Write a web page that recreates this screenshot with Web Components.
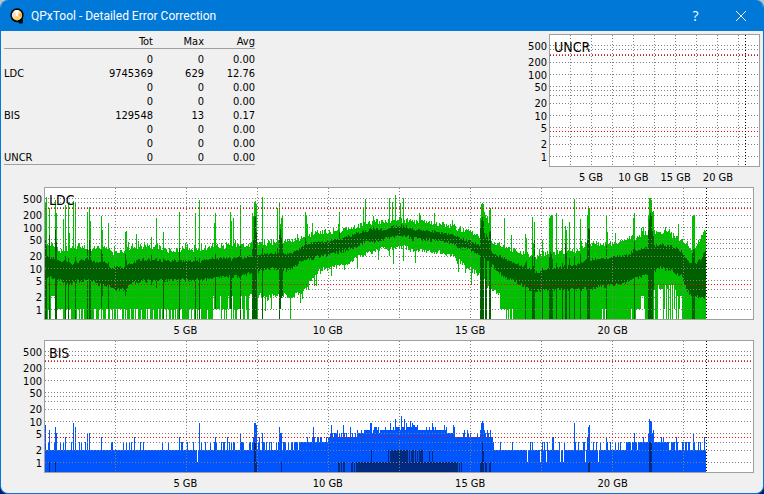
<!DOCTYPE html>
<html lang="en">
<head>
<meta charset="utf-8">
<title>QPxTool - Detailed Error Correction</title>
<style>
  body {
    margin: 0;
    background: linear-gradient(#b9c3cc 50%, #001a6e 50%);
    font: 11px/14px "DejaVu Sans Condensed", "Noto Sans", sans-serif;
    color: #000;
  }
  .summary {
    display: flex;
    justify-content: space-between;
    padding: 0 3px;
  }
  .summary error-chart {
    width: 254px;
  }
  .wide {
    margin-right: 9px;
  }
</style>
</head>
<body>
<tool-window>
  <span slot="title">QPxTool - Detailed Error Correction</span>
  <div class="summary">
    <error-table></error-table>
    <error-chart series="none">UNCR</error-chart>
  </div>
  <error-chart class="wide" series="ldc">LDC</error-chart>
  <error-chart class="wide" series="bis">BIS</error-chart>
</tool-window>

<script>
class ToolWindow extends HTMLElement {
  connectedCallback() {
    this.attachShadow({ mode: 'open' });
    this.shadowRoot.innerHTML = `
      <style>
        :host {
          display: flex;
          flex-direction: column;
          box-sizing: border-box;
          min-height: 100vh;
          border: 1px solid #0078d7;
          border-top: 0;
          border-radius: 8px;
          overflow: hidden;
          background: #f0f0f0;
        }
        header {
          display: flex;
          align-items: center;
          height: 31px;
          padding-left: 8px;
          background: #0078d7;
          color: #fff;
        }
        h1 {
          flex: 1;
          margin: 0 0 0 6px;
          font: 12px/16px Roboto, sans-serif;
        }
        header svg {
          display: block;
        }
        button {
          width: 45px;
          height: 31px;
          padding: 0;
          border: 0;
          display: flex;
          align-items: center;
          justify-content: center;
          background: none;
          color: inherit;
          font: 14px/16px "Open Sans", sans-serif;
        }
        main {
          padding-top: 3px;
        }
      </style>
      <header>
        <svg width="16" height="16" viewBox="0 0 16 16" aria-hidden="true">
          <ellipse cx="8" cy="7.2" rx="6.6" ry="7" fill="#000"/>
          <path d="M8.5 12.5 13.8 11v4.4H10z" fill="#000"/>
          <circle cx="8" cy="7.2" r="5.1" fill="#f4dfb5"/>
          <path d="M8 7.2 5 3.1A5.1 5.1 0 0 1 10.3 2.7z" fill="#fffbe9"/>
          <path d="M8 7.2 12.6 5a5.1 5.1 0 0 1 0 4.6z" fill="#ffad3c"/>
          <path d="M8 7.2 11 11.3A5.1 5.1 0 0 1 5 11.3z" fill="#ffd24e"/>
          <path d="M8 7.2 3.1 8.6A5.1 5.1 0 0 1 3.5 4.9z" fill="#e8dde4"/>
          <circle cx="8" cy="7.2" r="1.4" fill="#fff"/>
        </svg>
        <h1><slot name="title"></slot></h1>
        <button type="button" aria-label="Help">?</button>
        <button type="button" aria-label="Close">
          <svg width="10" height="10" viewBox="0 0 10 10">
            <path d="M0 0 10 10M10 0 0 10" stroke="#fff" fill="none"/>
          </svg>
        </button>
      </header>
      <main><slot></slot></main>
    `;
  }
}

class ErrorTable extends HTMLElement {
  connectedCallback() {
    const rows = [
      ['', '0', '0', '0.00'],
      ['LDC', '9745369', '629', '12.76'],
      ['', '0', '0', '0.00'],
      ['', '0', '0', '0.00'],
      ['BIS', '129548', '13', '0.17'],
      ['', '0', '0', '0.00'],
      ['', '0', '0', '0.00'],
      ['UNCR', '0', '0', '0.00']
    ];
    this.attachShadow({ mode: 'open' });
    this.shadowRoot.innerHTML = `
      <style>
        :host {
          display: block;
        }
        table {
          border-collapse: separate;
          border-spacing: 0;
          table-layout: fixed;
          width: 251px;
          border-bottom: 1px solid #a0a0a0;
        }
        th, td {
          padding: 2px 0 0;
          font-weight: normal;
          text-align: right;
          line-height: 12px;
          height: 12px;
        }
        thead th {
          border-bottom: 1px solid #a0a0a0;
        }
        th:first-child {
          text-align: left;
          width: 80px;
        }
        th:nth-child(2) { width: 69px; }
        th:nth-child(3) { width: 51px; }
        tbody::before {
          content: "";
          display: table-row;
          height: 3px;
        }
      </style>
      <table>
        <thead>
          <tr><th></th><th scope="col">Tot</th><th scope="col">Max</th><th scope="col">Avg</th></tr>
        </thead>
        <tbody>
          ${rows.map(r => `<tr><th scope="row">${r[0]}</th><td>${r[1]}</td><td>${r[2]}</td><td>${r[3]}</td></tr>`).join('')}
        </tbody>
      </table>
    `;
  }
}

const PLOT_HEIGHT = 131;
const COLUMNS = 661;

// small repeatable generator, so the noise is the same on every load
function generator(seed) {
  return () => {
    seed = (seed * 1664525 + 1013904223) >>> 0;
    return seed / 4294967296;
  };
}

// linear interpolation in a flat list of x, y pairs
function curve(points, x) {
  for (let i = 2; i < points.length; i += 2) {
    if (x <= points[i]) {
      const t = (x - points[i - 2]) / (points[i] - points[i - 2]);
      return points[i - 1] + (points[i + 1] - points[i - 1]) * Math.max(0, t);
    }
  }
  return points[points.length - 1];
}

// row of an error count on the logarithmic scale
function row(value) {
  return value < 1 ? PLOT_HEIGHT : Math.round(121 - 41 * Math.log10(value));
}

function bar(x, top, bottom) {
  top = Math.round(top);
  bottom = Math.round(bottom);
  return bottom > top ? `M${x} ${top}h1V${bottom}h-1z` : '';
}

const LDC_TOP = [0, 54, 8, 58, 14, 62, 26, 60, 34, 57, 44, 62, 52, 59, 60, 60, 68, 64, 76, 63, 86, 59, 105, 58,
  125, 62, 145, 61, 165, 59, 195, 57, 230, 54, 250, 53, 268, 45, 285, 43, 300, 42, 312, 38, 325, 35, 345, 33,
  352, 32, 365, 33, 385, 35, 402, 37, 415, 41, 425, 44, 435, 48, 448, 54, 458, 59, 468, 62, 482, 66, 492, 69,
  502, 65, 515, 64, 528, 64, 539, 57, 556, 55, 569, 56, 582, 52, 592, 48, 599, 45, 612, 44, 622, 45, 632, 50,
  639, 55, 647, 61, 655, 50, 661, 42];
const LDC_DARK_TOP = [0, 69, 12, 72, 28, 76, 40, 72, 52, 75, 60, 75, 65, 80, 78, 79, 90, 74, 98, 72, 155, 74,
  165, 71, 195, 70, 212, 68, 225, 66, 245, 66, 252, 63, 260, 57, 272, 55, 295, 52, 308, 47, 318, 44, 327, 41,
  340, 42, 347, 39, 361, 38, 365, 42, 382, 43, 395, 45, 408, 48, 422, 53, 432, 57, 448, 65, 462, 72, 478, 79,
  492, 85, 508, 80, 520, 79, 532, 77, 539, 73, 562, 70, 580, 68, 594, 62, 616, 57, 629, 60, 636, 64, 642, 73,
  649, 78, 656, 70, 661, 62];
const LDC_DARK_BOTTOM = [0, 87, 12, 91, 25, 95, 32, 92, 45, 92, 52, 95, 65, 97, 70, 101, 79, 101, 84, 95,
  95, 92, 145, 91, 162, 90, 195, 87, 212, 82, 225, 79, 242, 81, 252, 75, 262, 70, 278, 67, 295, 63, 308, 59,
  318, 54, 332, 51, 348, 48, 362, 47, 366, 50, 385, 51, 402, 53, 415, 59, 428, 62, 435, 65, 445, 75, 458, 88,
  468, 91, 478, 97, 485, 102, 535, 100, 556, 98, 579, 94, 592, 89, 602, 85, 615, 79, 626, 82, 636, 87,
  641, 100, 647, 108, 661, 108];
const LDC_BOTTOM = [205, 106, 225, 107, 235, 106, 245, 108, 258, 104, 265, 92, 275, 81, 285, 80, 295, 77,
  305, 74, 312, 69, 325, 64, 335, 61, 350, 59, 360, 58, 366, 62, 385, 63, 402, 65, 415, 73, 425, 81, 435, 87,
  440, 95, 448, 102, 455, 108];
// column, top of the light bar, top of the dark bar, bottom of the dark bar
const LDC_SPIKES = [
  [0, 14, 52, 131], [1, 9, 58, 131], [4, 20, 47, 131], [10, 12, 42, 131], [11, 25, 54, 131], [18, 31],
  [20, 17, 68, 131], [23, 16, 70, 131], [24, 45], [28, 13], [30, 15, 68, 131], [42, 24, 60, 131],
  [44, 19, 52, 131], [45, 33, 60, 131], [56, 28, 62, 120], [57, 42, 66, 108], [63, 35, 74, 121],
  [80, 44, 66, 108], [81, 43, 72, 104], [91, 46], [106, 49, 67, 97], [111, 30, 70, 100], [118, 44, 70, 131],
  [134, 24, 60, 131], [150, 25, 68, 131], [154, 12, 70, 131], [169, 35], [170, 25, 66, 121], [185, 24, 70, 121],
  [186, 33, 73, 121], [188, 30], [195, 17, 58, 131], [207, 25, 60, 131], [208, 28, 52, 131], [209, 14, 29, 131],
  [210, 13, 27, 131], [211, 16, 44, 131], [217, 9, 60, 131], [232, 20, 60], [234, 15, 47, 131],
  [235, 36, 41, 121], [236, 30, 50, 110], [237, 27, 56, 108], [260, 24, 50], [261, 28, 54], [262, 36],
  [267, 35], [293, 36], [294, 24, 44], [318, 19], [320, 11], [344, 10], [347, 14], [350, 7], [355, 15],
  [358, 10], [374, 25], [389, 25], [435, 30, 40, 131], [436, 16, 32, 131], [437, 15, 29, 131], [438, 16, 33, 131],
  [439, 24, 45], [440, 27, 50, 131], [441, 30, 46, 131], [442, 28, 49], [443, 35, 53], [444, 22, 44, 131],
  [445, 20, 43, 131], [459, 30], [466, 47], [480, 46, 75, 131], [481, 50, 73], [487, 29, 68, 131],
  [488, 55, 78, 131], [489, 34, 52, 131], [497, 52, 80, 131], [504, 30, 68, 131], [505, 28, 64, 131],
  [506, 27, 66, 131], [507, 27, 71, 131], [511, 25, 75, 131], [517, 31, 75, 131], [520, 38, 56, 131],
  [521, 42, 65, 131], [524, 34, 70, 131], [529, 11, 68, 131], [535, 31, 66, 131], [542, 27, 52, 131],
  [543, 18, 40, 131], [544, 20, 41, 131], [561, 27, 57, 131], [562, 44], [570, 45], [588, 30, 60],
  [589, 25, 53, 131], [603, 27, 42, 131], [604, 10, 31, 131], [605, 10, 25, 131], [606, 12, 27, 131],
  [607, 24, 43, 131], [608, 23, 48, 102], [633, 36], [647, 28, 65, 131], [648, 27, 60, 131], [649, 27, 61, 131]
];

function ldcPaths() {
  const random = generator(77);
  const spikes = new Map(LDC_SPIKES.map(s => [s[0], s]));
  let light = '';
  let dark = '';
  for (let x = 0; x < COLUMNS; x++) {
    let top = curve(LDC_TOP, x) + random() * 6 - 3;
    let darkTop = curve(LDC_DARK_TOP, x) + random() * 3 - 2;
    let darkBottom = curve(LDC_DARK_BOTTOM, x) + random() * 4 - 1;
    let bottom;
    const r = random();
    if (x < 18 && x > 5 && x !== 10 && x !== 11) {
      bottom = x < 10 ? 108 : 121;
    } else if (x < 168) {
      bottom = r < 0.45 ? 121 : PLOT_HEIGHT;
    } else if (x < 205) {
      bottom = r < 0.3 ? 108 : r < 0.8 ? 121 : PLOT_HEIGHT;
    } else if (x < 455) {
      bottom = curve(LDC_BOTTOM, x) + random() * 5 - 2;
      if (r < 0.12) bottom += 5 + random() * 10;
      if (x < 246 && r < 0.06) bottom = PLOT_HEIGHT;
    } else if (x < 469) {
      bottom = r < 0.45 ? 121 : PLOT_HEIGHT;
    } else if (x > 556 && x < 561 || x > 583 && x < 596) {
      bottom = r < 0.6 ? 121 : PLOT_HEIGHT;
    } else if (x > 595 && x < 637) {
      bottom = r < 0.2 ? PLOT_HEIGHT : r < 0.35 ? 121 : x < 607 || x > 630 ? 108 : r < 0.7 ? 101 : 97;
    } else {
      bottom = PLOT_HEIGHT;
    }
    if (r > 0.94) top -= 4;
    const spike = spikes.get(x);
    if (spike) {
      top = spike[1];
      darkTop = spike[2] || darkTop;
      darkBottom = spike[3] || darkBottom;
      bottom = Math.max(bottom, darkBottom);
    }
    light += bar(x, top, bottom);
    dark += bar(x, darkTop, darkBottom);
  }
  return `<path fill="#00c000" d="${light}"/><path fill="#006000" d="${dark}"/>`;
}

// expected error count per column
const BIS_LEVEL = [0, 2.2, 155, 2.2, 165, 2.4, 205, 2.5, 225, 2.4, 245, 2.5, 254, 3, 284, 3.3, 287, 4, 312, 4.4,
  317, 5.4, 340, 6, 355, 6.6, 372, 6.3, 390, 6, 400, 5.5, 408, 5, 412, 4.2, 434, 4, 441, 4.6, 446, 4, 448, 2.4,
  455, 2.2, 540, 2.3, 585, 2.5, 598, 3.1, 622, 3.1, 628, 2.3, 661, 2.4];
const BIS_SPIKES = [0, 8, 4, 6, 10, 7, 11, 5, 20, 4, 28, 9, 30, 7, 42, 5, 44, 5, 56, 4, 89, 4, 134, 4, 152, 1,
  154, 9, 170, 4, 182, 4, 195, 5, 208, 4, 209, 9, 210, 9, 211, 8, 214, 4, 217, 5, 234, 7, 235, 5, 236, 5, 268, 7,
  269, 4, 286, 8, 298, 8, 305, 7, 325, 9, 326, 9, 345, 9, 350, 11, 356, 13, 359, 11, 361, 9, 365, 10, 367, 9,
  387, 9, 399, 8, 408, 8, 409, 7, 419, 6, 435, 6, 436, 9, 437, 10, 438, 9, 439, 6, 440, 5, 445, 6, 482, 1, 495, 1,
  501, 1, 507, 4, 508, 4, 515, 1, 518, 1, 529, 9, 540, 1, 542, 4, 543, 7, 544, 8, 553, 1, 561, 4, 589, 5,
  603, 5, 604, 11, 605, 10, 606, 10, 607, 5, 608, 6, 631, 4, 648, 5, 659, 4];
// first column, last column, count
const BIS_DARK = [[4, 4, 1], [10, 10, 1], [209, 210, 3], [211, 211, 1], [236, 236, 1], [293, 294, 1], [296, 296, 1],
  [298, 299, 1], [306, 307, 1], [309, 309, 1], [311, 412, 1], [414, 414, 1], [416, 416, 1], [326, 326, 2],
  [343, 343, 2], [345, 362, 2], [364, 364, 2], [366, 368, 2], [370, 370, 2], [372, 372, 2], [374, 377, 2],
  [384, 384, 2], [387, 387, 2], [435, 438, 1], [437, 437, 3], [438, 438, 2], [440, 441, 1], [444, 445, 1],
  [543, 544, 1], [604, 606, 3]];

function bisPaths() {
  const random = generator(5);
  const spikes = new Map();
  for (let i = 0; i < BIS_SPIKES.length; i += 2) {
    spikes.set(BIS_SPIKES[i], BIS_SPIKES[i + 1]);
  }
  let light = '';
  let dark = '';
  for (let x = 0; x < COLUMNS; x++) {
    let value = Math.floor(curve(BIS_LEVEL, x) + random());
    // the busy middle of the disc jumps by one more
    if (x > 254 && x < 446 && random() > 0.75) value++;
    light += bar(x, row(spikes.get(x) || value), PLOT_HEIGHT);
  }
  for (const [first, last, value] of BIS_DARK) {
    for (let x = first; x <= last; x++) {
      dark += bar(x, row(value), PLOT_HEIGHT);
    }
  }
  return `<path fill="#0055ff" d="${light}"/><path fill="#002a80" d="${dark}"/>`;
}

class ErrorChart extends HTMLElement {
  connectedCallback() {
    const series = this.getAttribute('series');
    const small = series === 'none';
    const width = small ? 209 : 708;
    const step = small ? 21 : 71;
    const end = small ? 195 : 661;
    const line = (x1, y1, x2, y2, color) =>
      `<path d="M${x1} ${y1}L${x2} ${y2}" stroke="${color}"/>`;

    let grid = '';
    for (const value of [1, 2, 3, 5, 10, 20, 30, 40, 50, 100, 200, 300, 400, 500]) {
      const y = Math.floor(121.4 - 41 * Math.log10(value)) + 0.5;
      grid += line(0, y, width, y, '#808080');
    }
    for (let k = 1; k < 10; k++) {
      grid += line(k * step - 0.5, 0, k * step - 0.5, PLOT_HEIGHT, '#808080');
    }
    grid += line(0, 96.5, width, 96.5, '#ff0000');
    grid += line(0, 20.5, width, 20.5, '#ff0000');
    grid += line(end + 0.5, 0, end + 0.5, PLOT_HEIGHT, '#000');

    this.attachShadow({ mode: 'open' });
    this.shadowRoot.innerHTML = `
      <style>
        :host {
          display: grid;
          grid-template-columns: 43px minmax(0, 1fr);
          grid-template-rows: 133px 20px;
        }
        .counts {
          display: grid;
          grid-template-rows: 19px 16px 13px 12px 16px 13px 12px 16px 13px;
          align-items: end;
          padding-right: 2px;
          text-align: right;
          line-height: 12px;
        }
        .plot {
          position: relative;
          border: 1px solid #a0a0a0;
          background: #fff;
        }
        .plot svg {
          display: block;
          width: 100%;
          height: 131px;
        }
        .grid path {
          fill: none;
          stroke-dasharray: 1 2;
        }
        .name {
          position: absolute;
          top: 4px;
          left: 4px;
          font-size: 14px;
          line-height: 16px;
        }
        .sizes {
          grid-column: 2;
          display: grid;
          grid-template-columns: 70fr repeat(4, 142fr) 70fr;
          align-items: center;
          padding-top: 2px;
          text-align: center;
          white-space: nowrap;
        }
        .sizes span:first-child {
          grid-column: 2;
        }
      </style>
      <div class="counts">
        ${[500, 200, 100, 50, 20, 10, 5, 2, 1].map(n => `<span>${n}</span>`).join('')}
      </div>
      <div class="plot">
        <svg viewBox="0 0 ${width} ${PLOT_HEIGHT}" preserveAspectRatio="none" shape-rendering="crispEdges" aria-hidden="true">
          ${series === 'ldc' ? ldcPaths() : series === 'bis' ? bisPaths() : ''}
          <g class="grid">${grid}</g>
        </svg>
        <div class="name"><slot></slot></div>
      </div>
      <div class="sizes">
        ${[5, 10, 15, 20].map(n => `<span>${n} GB</span>`).join('')}
      </div>
    `;
  }
}

customElements.define('tool-window', ToolWindow);
customElements.define('error-table', ErrorTable);
customElements.define('error-chart', ErrorChart);
</script>
</body>
</html>
